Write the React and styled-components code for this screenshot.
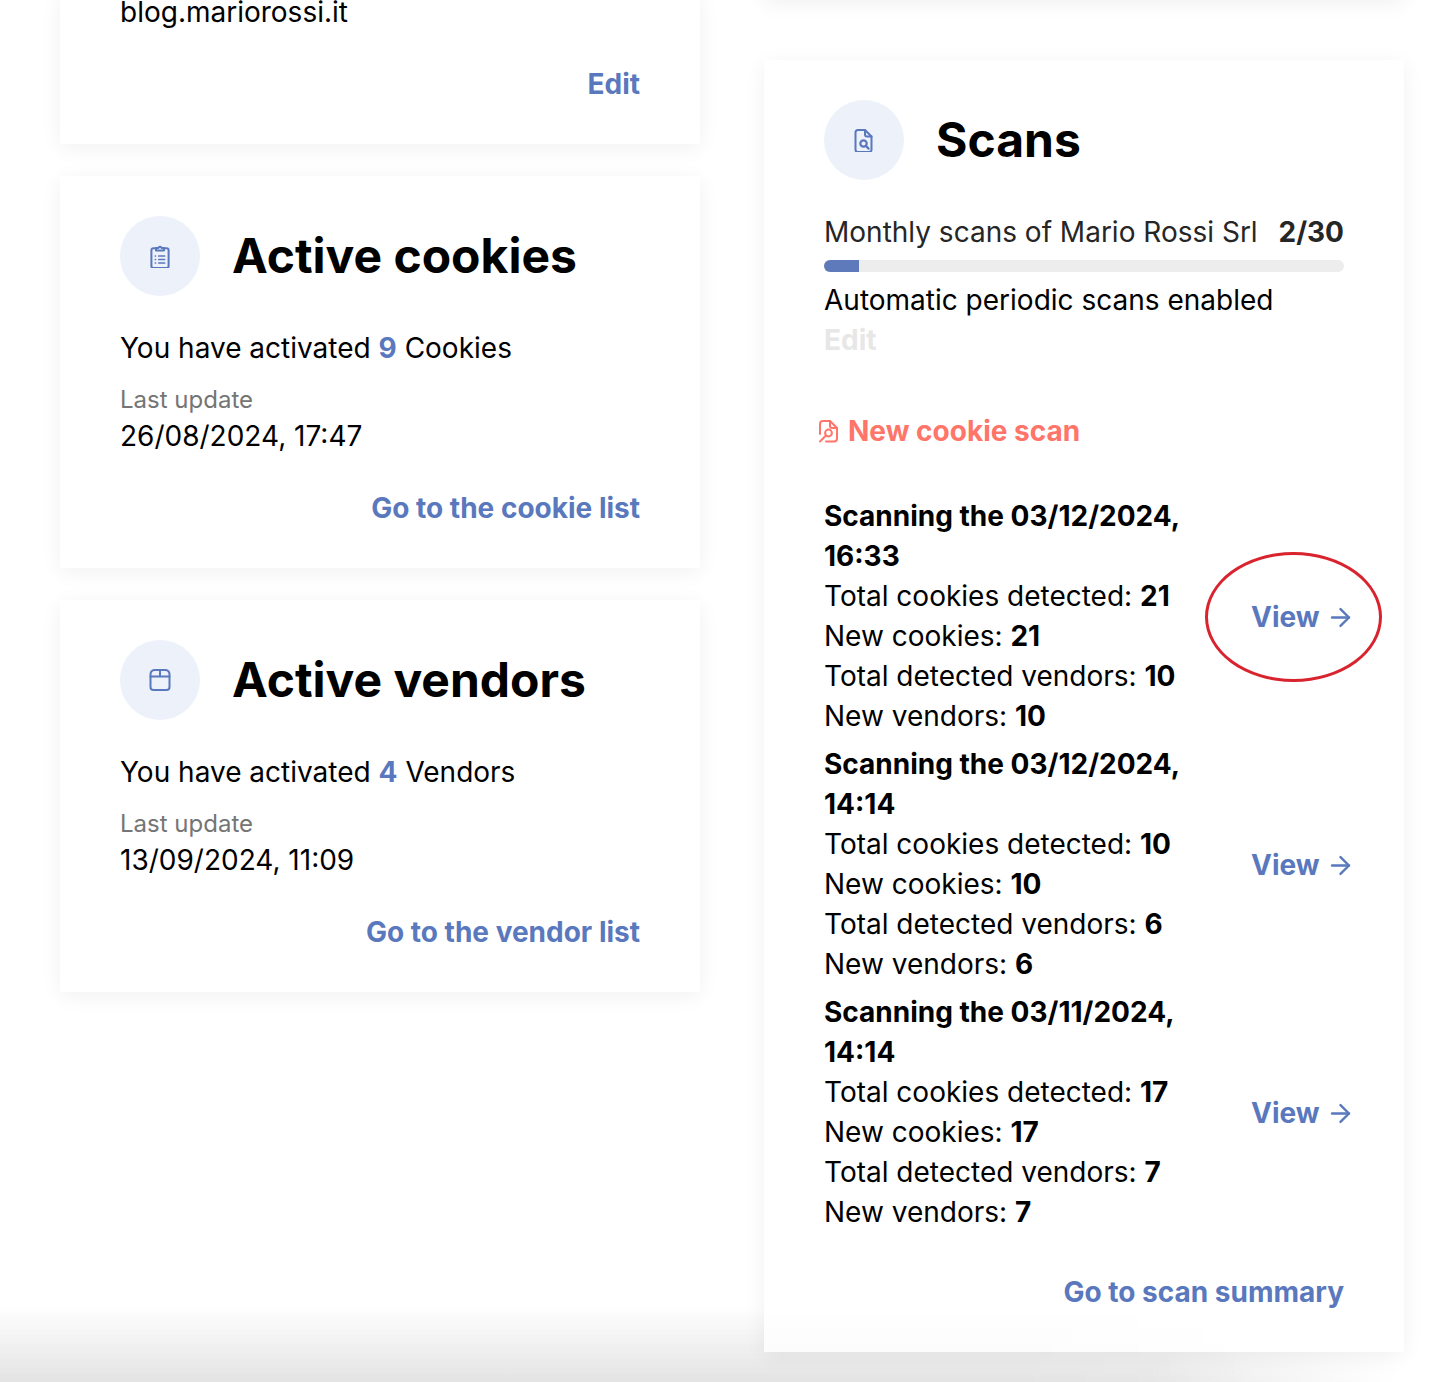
import React from "react";
import styled, { createGlobalStyle } from "styled-components";
import { ArrowRight } from "lucide-react";

const BLUE = "#5a78bd";
const CORAL = "#ff7569";

const GlobalStyle = createGlobalStyle`
  html, body {
    margin: 0;
    padding: 0;
    background: #fff;
  }
  body {
    font-family: Inter, "Liberation Sans", sans-serif;
    color: #000;
  }
`;

const Page = styled.div`
  position: relative;
  width: 1440px;
  height: 1382px;
  overflow: hidden;
  display: grid;
  grid-template-columns: 640px 640px;
  column-gap: 64px;
  padding-left: 60px;
  box-sizing: border-box;
  align-items: start;
  background: #fff;
`;

/* grey fade at the bottom edge of the window, behind the cards */
const BottomFade = styled.div`
  position: absolute;
  left: 0;
  right: 0;
  bottom: 0;
  height: 76px;
  background: linear-gradient(to bottom, rgba(232, 232, 232, 0), #e8e8e8);
  -webkit-mask-image: linear-gradient(to right, #000 80%, transparent 97%);
  mask-image: linear-gradient(to right, #000 80%, transparent 97%);
`;

/* the same fade reaches very faintly over the cards */
const BottomTint = styled.div`
  position: absolute;
  left: 0;
  right: 0;
  bottom: 0;
  height: 76px;
  pointer-events: none;
  background: linear-gradient(to bottom, rgba(0, 0, 0, 0), rgba(0, 0, 0, 0.02));
  -webkit-mask-image: linear-gradient(to right, #000 70%, transparent 88%);
  mask-image: linear-gradient(to right, #000 70%, transparent 88%);
`;

const LeftColumn = styled.div`
  position: relative;
  display: flex;
  flex-direction: column;
  gap: 32px;
  margin-top: -8px;
`;

const RightColumn = styled.div`
  position: relative;
  display: flex;
  flex-direction: column;
  gap: 60px;
  margin-top: -40px;
`;

const Card = styled.section`
  background: #fff;
  box-shadow: 0 4px 20px rgba(0, 0, 0, 0.06);
  padding: 40px 60px;
  box-sizing: border-box;
`;

const CutCard = styled(Card)`
  padding-top: 0;
`;

const StubCard = styled(Card)`
  padding: 0;
  height: 40px;
`;

const CardHeader = styled.div`
  display: flex;
  align-items: center;
  gap: 32px;
  margin-bottom: 32px;
`;

const IconCircle = styled.div`
  width: 80px;
  height: 80px;
  border-radius: 50%;
  background: #ecf1fa;
  display: flex;
  align-items: center;
  justify-content: center;
  flex: none;
`;

const Title = styled.h2`
  margin: 0;
  font-size: 48px;
  line-height: 56px;
  font-weight: 700;
`;

const Line = styled.div`
  font-size: 28px;
  line-height: 40px;
  color: #000;
`;

const Accent = styled.span`
  color: ${BLUE};
  font-weight: 700;
`;

const UpdateLabel = styled.div`
  margin-top: 16px;
  font-size: 24px;
  line-height: 32px;
  color: #757575;
`;

const LinkRow = styled.div`
  display: flex;
  justify-content: flex-end;
  margin-top: ${(p) => p.$top || "32px"};
`;

const TextLink = styled.a`
  font-size: 28px;
  line-height: 40px;
  font-weight: 700;
  color: ${BLUE};
  cursor: pointer;
`;

const QuotaRow = styled.div`
  display: flex;
  justify-content: space-between;
  font-size: 28px;
  line-height: 40px;
  color: #262626;
`;

const Bold = styled.b`
  font-weight: 700;
`;

const Track = styled.div`
  height: 12px;
  margin: 8px 0;
  border-radius: 6px;
  background: #ededed;
  overflow: hidden;
`;

const Fill = styled.div`
  height: 100%;
  background: #5f7aba;
`;

const MutedEdit = styled.div`
  font-size: 28px;
  line-height: 40px;
  font-weight: 700;
  color: #e7e7e7;
`;

const NewScan = styled.a`
  display: flex;
  align-items: center;
  gap: 6px;
  margin: 51px 0 45px -6px;
  font-size: 28px;
  line-height: 40px;
  font-weight: 700;
  color: ${CORAL};
  cursor: pointer;
`;

const ScanList = styled.div`
  display: flex;
  flex-direction: column;
  gap: 8px;
`;

const ScanRow = styled.div`
  display: grid;
  grid-template-columns: 427px 93px;
  align-items: center;
`;

const ScanInfo = styled.div`
  padding-right: 60px;
  font-size: 28px;
  line-height: 40px;
`;

const ScanTitle = styled.div`
  font-weight: 700;
`;

const ViewLink = styled.a`
  position: relative;
  display: flex;
  align-items: center;
  gap: 6px;
  margin-top: 2px;
  font-size: 28px;
  line-height: 40px;
  font-weight: 700;
  color: ${BLUE};
  white-space: nowrap;
  cursor: pointer;

  svg {
    flex: none;
  }
`;

/* red hand annotation round the first View link */
const Highlight = styled.span`
  position: absolute;
  left: -46px;
  top: -45px;
  width: 177px;
  height: 130px;
  box-sizing: border-box;
  border: 3px solid #d9232e;
  border-radius: 50%;
`;

const ClipboardIcon = () => (
  <svg width="24" height="24" viewBox="0 -1 24 24" fill="none" stroke={BLUE} strokeWidth="2" strokeLinecap="round" strokeLinejoin="round">
    <path d="M8 3.2H5.4a2 2 0 0 0-2 2V21a2 2 0 0 0 2 2h13.2a2 2 0 0 0 2-2V5.2a2 2 0 0 0-2-2H16" />
    <path d="M8 5.6V3h2.4a1.7 1.7 0 0 1 3.2 0H16v2.6z" />
    <path d="M7.4 11h.1M10.8 11h5.8M7.4 14.5h.1M10.8 14.5h5.8M7.4 18h.1M10.8 18h5.8" strokeWidth="1.7" />
  </svg>
);

const BoxIcon = () => (
  <svg width="24" height="24" viewBox="0 0 24 24" fill="none" stroke={BLUE} strokeWidth="2" strokeLinecap="round" strokeLinejoin="round">
    <path d="M6.5 2h11A4.5 4.5 0 0 1 21.5 6.5V19a3 3 0 0 1-3 3H5.5a3 3 0 0 1-3-3V6.5A4.5 4.5 0 0 1 6.5 2z" />
    <path d="M2.5 8.5h19M12 2v6.5" />
  </svg>
);

const ScanFileIcon = () => (
  <svg width="24" height="24" viewBox="0 0 24 24" fill="none" stroke={BLUE} strokeWidth="2" strokeLinecap="round" strokeLinejoin="round">
    <path d="M13 2H6a2.5 2.5 0 0 0-2.5 2.5v17A2.5 2.5 0 0 0 6 24h11a2.5 2.5 0 0 0 2.5-2.5V8.5z" />
    <path d="M13 2v4.5a2 2 0 0 0 2 2h4.5" />
    <circle cx="11.5" cy="15.5" r="3.2" strokeWidth="2.2" />
    <path d="M14 18l2.6 2.6" strokeWidth="2.2" />
  </svg>
);

const NewScanIcon = () => (
  <svg width="24" height="24" viewBox="2 0 24 24" fill="none" stroke={CORAL} strokeWidth="2" strokeLinecap="round" strokeLinejoin="round">
    <path d="M4 15V5a3 3 0 0 1 3-3h7l7 7v10.5a3 3 0 0 1-3 3H10" />
    <path d="M14 2v5a2 2 0 0 0 2 2h5" />
    <circle cx="12.5" cy="14" r="3.4" />
    <path d="M10 16.5L4 22.5" />
  </svg>
);

const scans = [
  { when: "03/12/2024, 16:33", cookies: 21, vendors: 10, marked: true },
  { when: "03/12/2024, 14:14", cookies: 10, vendors: 6 },
  { when: "03/11/2024, 14:14", cookies: 17, vendors: 7 },
];

const StatCard = ({ icon, title, count, noun, date, linkText }) => (
  <Card>
    <CardHeader>
      <IconCircle>{icon}</IconCircle>
      <Title>{title}</Title>
    </CardHeader>
    <Line>
      You have activated <Accent>{count}</Accent> {noun}
    </Line>
    <UpdateLabel>Last update</UpdateLabel>
    <Line>{date}</Line>
    <LinkRow>
      <TextLink>{linkText}</TextLink>
    </LinkRow>
  </Card>
);

const App = () => (
  <Page>
    <GlobalStyle />
    <BottomFade />
    <LeftColumn>
      <CutCard>
        <Line>blog.mariorossi.it</Line>
        <LinkRow>
          <TextLink>Edit</TextLink>
        </LinkRow>
      </CutCard>
      <StatCard
        icon={<ClipboardIcon />}
        title="Active cookies"
        count={9}
        noun="Cookies"
        date="26/08/2024, 17:47"
        linkText="Go to the cookie list"
      />
      <StatCard
        icon={<BoxIcon />}
        title="Active vendors"
        count={4}
        noun="Vendors"
        date="13/09/2024, 11:09"
        linkText="Go to the vendor list"
      />
    </LeftColumn>
    <RightColumn>
      <StubCard />
      <Card>
        <CardHeader>
          <IconCircle>
            <ScanFileIcon />
          </IconCircle>
          <Title>Scans</Title>
        </CardHeader>
        <QuotaRow>
          <span>Monthly scans of Mario Rossi Srl</span>
          <Bold>2/30</Bold>
        </QuotaRow>
        <Track>
          <Fill style={{ width: `${(2 / 30) * 100}%` }} />
        </Track>
        <Line>Automatic periodic scans enabled</Line>
        <MutedEdit>Edit</MutedEdit>
        <NewScan>
          <NewScanIcon />
          New cookie scan
        </NewScan>
        <ScanList>
          {scans.map((s) => (
            <ScanRow key={s.when}>
              <ScanInfo>
                <ScanTitle>Scanning the {s.when}</ScanTitle>
                <div>Total cookies detected: <Bold>{s.cookies}</Bold></div>
                <div>New cookies: <Bold>{s.cookies}</Bold></div>
                <div>Total detected vendors: <Bold>{s.vendors}</Bold></div>
                <div>New vendors: <Bold>{s.vendors}</Bold></div>
              </ScanInfo>
              <ViewLink>
                View
                <ArrowRight size={29} strokeWidth={2} />
                {s.marked && <Highlight />}
              </ViewLink>
            </ScanRow>
          ))}
        </ScanList>
        <LinkRow $top="40px">
          <TextLink>Go to scan summary</TextLink>
        </LinkRow>
      </Card>
    </RightColumn>
    <BottomTint />
  </Page>
);

export default App;
